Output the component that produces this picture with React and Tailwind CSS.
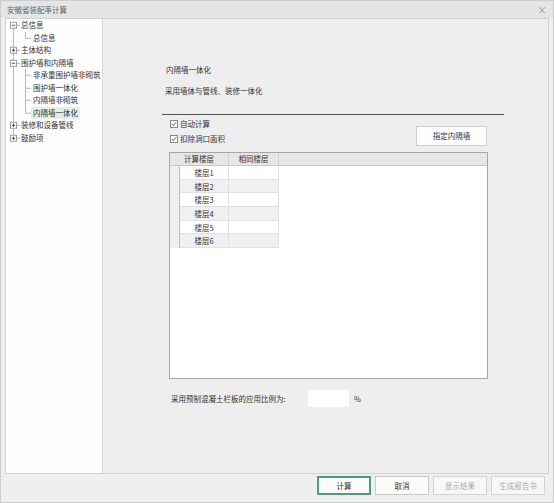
import React from 'react';

const treeRows = [
    { label: '总信息', level: 0, box: '-', first: true },
    { label: '总信息', level: 1, lastChild: true },
    { label: '主体结构', level: 0, box: '+' },
    { label: '围护墙和内隔墙', level: 0, box: '-' },
    { label: '非承重围护墙非砌筑', level: 1 },
    { label: '围护墙一体化', level: 1 },
    { label: '内隔墙非砌筑', level: 1 },
    { label: '内隔墙一体化', level: 1, lastChild: true, selected: true },
    { label: '装修和设备管线', level: 0, box: '+' },
    { label: '鼓励项', level: 0, box: '+', last: true },
];

const TreeLines = ({ row }) => {
    const h = 12.5;
    const c = 6.25;
    const line = '#b4b4b4';
    if (row.level === 0) {
        return (
            <svg width="15" height={h} className="shrink-0">
                {!row.first && <line x1="7.5" y1="0" x2="7.5" y2={c - 3} stroke={line} strokeWidth="1" />}
                {!row.last && <line x1="7.5" y1={c + 3} x2="7.5" y2={h} stroke={line} strokeWidth="1" />}
                <line x1="10.5" y1={c} x2="14" y2={c} stroke={line} strokeWidth="1" />
                <rect x="4.5" y={c - 3} width="6" height="6" fill="#fff" stroke="#9c9c9c" strokeWidth="1" />
                <line x1="5.8" y1={c} x2="9.2" y2={c} stroke="#555" strokeWidth="1" />
                {row.box === '+' && <line x1="7.5" y1={c - 1.7} x2="7.5" y2={c + 1.7} stroke="#555" strokeWidth="1" />}
            </svg>
        );
    }
    return (
        <svg width="25" height={h} className="shrink-0">
            <line x1="7.5" y1="0" x2="7.5" y2={h} stroke={line} strokeWidth="1" />
            <line x1="19.5" y1="0" x2="19.5" y2={row.lastChild ? c : h} stroke={line} strokeWidth="1" />
            <line x1="19.5" y1={c} x2="25" y2={c} stroke={line} strokeWidth="1" />
        </svg>
    );
};

const Check = ({ label }) => (
    <div className="h-[12px] flex items-center gap-[2px]">
        <svg width="8" height="8" viewBox="0 0 8 8" className="shrink-0">
            <rect x="0.5" y="0.5" width="7" height="7" fill="#fff" stroke="#8a8a8a" />
            <path d="M1.8 4.1 L3.3 5.6 L6.2 2.3" fill="none" stroke="#444" strokeWidth="0.9" />
        </svg>
        <span>{label}</span>
    </div>
);

const floors = ['楼层1', '楼层2', '楼层3', '楼层4', '楼层5', '楼层6'];

export default function App() {
    return (
        <div className="w-[554px] h-[503px] bg-[#efefef] border border-[#cdcdcd] flex flex-col text-[7.5px] leading-[12px] text-[#333] font-['Noto_Sans_CJK_SC',sans-serif] overflow-hidden">
            {/* Title bar */}
            <div className="h-[17px] shrink-0 bg-[#e5e5e5] flex items-center justify-between pl-[6px] pr-[6px]">
                <span className="text-[#666]">安徽省装配率计算</span>
                <span className="text-[10px] text-[#9a9a9a] leading-none">×</span>
            </div>

            {/* Main */}
            <div className="mx-[4px] h-[456px] shrink-0 border border-[#d2d2d2] flex">
                {/* Tree */}
                <div className="w-[97px] shrink-0 bg-[#fefefe] border-r border-[#d8d8d8]">
                    {treeRows.map((row, i) => (
                        <div key={i} className="h-[12.5px] flex items-center">
                            <TreeLines row={row} />
                            <span className={`px-[2px] leading-[12px] whitespace-nowrap ${row.level === 0 ? 'ml-[-2px]' : ''} ${row.selected ? 'bg-[#dff0eb]' : ''}`}>
                                {row.label}
                            </span>
                        </div>
                    ))}
                </div>

                {/* Right panel */}
                <div className="flex-1 bg-[#eeeeee] pt-[45px]">
                    <div className="ml-[59px] w-[342px]">
                        <div className="ml-[4px] h-[12px]">内隔墙一体化</div>
                        <div className="ml-[3px] mt-[9px] h-[12px]">采用墙体与管线、装修一体化</div>
                        <div className="mt-[17px] h-px bg-[#555]" />

                        <div className="mt-[3px] flex h-[28px]">
                            <div className="ml-[8px] flex flex-col gap-[3px]">
                                <Check label="自动计算" />
                                <Check label="扣除洞口面积" />
                            </div>
                            <button className="ml-auto mr-[17px] mt-[8px] w-[71px] h-[20px] bg-[#fdfdfd] border border-[#cfcfcf] text-[#333]">
                                指定内隔墙
                            </button>
                        </div>

                        {/* Table */}
                        <div className="mt-[6px] ml-[7px] w-[319px] h-[227px] bg-white border border-[#a6a6a6]">
                            <div className="h-[13px] bg-[#e6e6e6] border-b border-[#c9c9c9] flex">
                                <div className="w-[59px] border-r border-[#d2d2d2] text-center leading-[12px]">计算楼层</div>
                                <div className="w-[50px] border-r border-[#d2d2d2] text-center leading-[12px]">相同楼层</div>
                            </div>
                            {floors.map((f, i) => (
                                <div key={f} className="h-[13.7px] flex">
                                    <div className="w-[10px] bg-[#f0f0f0] border-r border-[#bcbcbc]" />
                                    <div className={`w-[49px] border-r border-b border-[#e2e2e2] text-center leading-[13px] ${i % 2 ? 'bg-[#f0f0f0]' : 'bg-white'}`}>{f}</div>
                                    <div className={`w-[50px] border-r border-b border-[#e2e2e2] ${i % 2 ? 'bg-[#f0f0f0]' : 'bg-white'}`} />
                                </div>
                            ))}
                        </div>

                        <div className="mt-[11px] ml-[9px] h-[17px] flex items-center">
                            <span className="w-[137px] whitespace-nowrap">采用预制混凝土栏板的应用比例为:</span>
                            <div className="w-[41px] h-[17px] bg-white" />
                            <span className="ml-[5px]">%</span>
                        </div>
                    </div>
                </div>
            </div>

            {/* Bottom buttons */}
            <div className="flex-1 flex justify-end items-start pt-[2px] pr-[8px] gap-[4px]">
                <button className="w-[54px] h-[19px] bg-[#fbfbfb] border-2 border-[#4c9a8b] text-[#333]">计算</button>
                <button className="w-[54px] h-[19px] bg-[#fbfbfb] border border-[#c9c9c9] text-[#333]">取消</button>
                <button className="w-[54px] h-[19px] bg-[#f7f7f7] border border-[#d4d4d4] text-[#aaa]">显示结果</button>
                <button className="w-[54px] h-[19px] bg-[#f7f7f7] border border-[#d4d4d4] text-[#aaa]">生成报告书</button>
            </div>
        </div>
    );
}
